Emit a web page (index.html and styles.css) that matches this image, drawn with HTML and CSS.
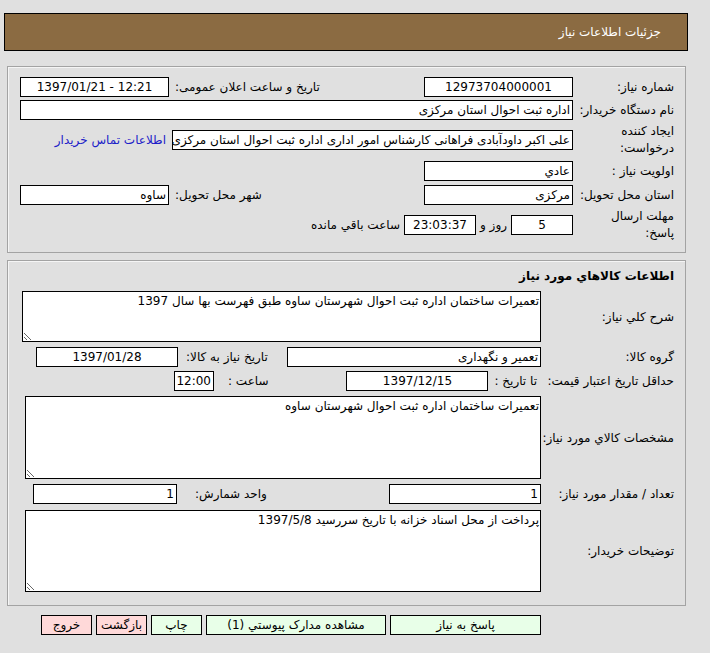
FILE: index.html
```html
<!DOCTYPE html>
<html lang="fa" dir="rtl">
<head>
<meta charset="utf-8">
<title>جزئیات اطلاعات نیاز</title>
<link rel="stylesheet" href="styles.css">
</head>
<body>
<div class="page">
  <div class="header"><span class="title">جزئیات اطلاعات نیاز</span></div>

  <div class="panel panel-info">
    <div class="grid">
      <div class="lbl">شماره نیاز:</div>
      <div class="box center">12973704000001</div>
      <div class="lbl2">تاریخ و ساعت اعلان عمومی:</div>
      <div class="box center ltr">1397/01/21 - 12:21</div>

      <div class="lbl">نام دستگاه خریدار:</div>
      <div class="box span3">اداره ثبت احوال استان مرکزی</div>

      <div class="lbl two">ایجاد کننده<br>درخواست:</div>
      <div class="span3 inline">
        <div class="box creator">علی اکبر داودآبادی فراهانی کارشناس امور اداری اداره ثبت احوال استان مرکزی</div>
        <a class="link" href="#">اطلاعات تماس خریدار</a>
      </div>

      <div class="lbl nudge">اولویت نیاز :</div>
      <div class="box nudge">عادي</div>

      <div class="lbl nudge">استان محل تحویل:</div>
      <div class="box nudge">مرکزی</div>
      <div class="lbl2 nudge">شهر محل تحویل:</div>
      <div class="box nudge">ساوه</div>

      <div class="lbl two">مهلت ارسال<br>پاسخ:</div>
      <div class="span3 inline">
        <div class="box center days">5</div>
        <span class="txt">روز و</span>
        <div class="box center clock">23:03:37</div>
        <span class="txt">ساعت باقي مانده</span>
      </div>
    </div>
  </div>

  <div class="panel panel-goods">
    <div class="goods-title">اطلاعات کالاهاي مورد نیاز</div>

    <div class="row row-desc">
      <div class="plbl">شرح کلي نیاز:</div>
      <div class="pcontent"><textarea class="ta ta-desc" readonly>تعمیرات ساختمان اداره ثبت احوال شهرستان ساوه طبق فهرست بها سال 1397</textarea></div>
    </div>

    <div class="row row-group">
      <div class="plbl">گروه کالا:</div>
      <div class="pcontent">
        <div class="box w-group">تعمیر و نگهداری</div>
        <div class="pair pair-need">
          <span class="txt">تاریخ نیاز به کالا:</span>
          <div class="box center w-need">1397/01/28</div>
        </div>
      </div>
    </div>

    <div class="row row-valid">
      <div class="plbl">حداقل تاریخ اعتبار قیمت:</div>
      <div class="pcontent">
        <span class="txt to-date">تا تاریخ :</span>
        <div class="box center w-valid">1397/12/15</div>
        <div class="pair pair-hour">
          <span class="txt">ساعت :</span>
          <div class="box center w-hour">12:00</div>
        </div>
      </div>
    </div>

    <div class="row row-spec">
      <div class="plbl">مشخصات کالاي مورد نیاز:</div>
      <div class="pcontent"><textarea class="ta ta-spec" readonly>تعمیرات ساختمان اداره ثبت احوال شهرستان ساوه</textarea></div>
    </div>

    <div class="row row-qty">
      <div class="plbl">تعداد / مقدار مورد نیاز:</div>
      <div class="pcontent">
        <div class="box w-qty">1</div>
        <div class="pair pair-unit">
          <span class="txt">واحد شمارش:</span>
          <div class="box w-unit">1</div>
        </div>
      </div>
    </div>

    <div class="row row-notes">
      <div class="plbl">توضیحات خریدار:</div>
      <div class="pcontent"><textarea class="ta ta-notes" readonly>پرداخت از محل اسناد خزانه با تاریخ سررسید 1397/5/8</textarea></div>
    </div>
  </div>

  <div class="buttons">
    <button class="btn green b-reply">پاسخ به نیاز</button>
    <button class="btn green b-docs">مشاهده مدارک پیوستي (1)</button>
    <button class="btn green b-small">چاپ</button>
    <button class="btn pink b-small">بازگشت</button>
    <button class="btn pink b-small">خروج</button>
  </div>
</div>
</body>
</html>
```

FILE: styles.css
```css
html, body {
  margin: 0;
  padding: 0;
  background: #e0e0e0;
}

body {
  font-family: "DejaVu Sans", sans-serif;
  font-size: 12px;
  color: #000;
}

.page {
  width: 684px;
  margin: 13px auto 0 4px;
}

.header {
  height: 36px;
  background: #8b6b42;
  border: 1px solid #000;
  display: flex;
  align-items: center;
  padding-right: 26px;
}

.title {
  color: #fff;
  font-size: 12px;
}

.panel {
  margin: 15px 2px 0 auto;
  border: 1px solid #a3a3a3;
  box-shadow: inset 1px 1px 0 #f5f5f5;
  background: #e0e0e0;
}

.panel-info {
  padding: 10px 11px 10px 11px;
  width: 655px;
}

.grid {
  display: grid;
  grid-template-columns: 101px 149px 255px 149px;
  row-gap: 3px;
  align-items: center;
}

.lbl {
  grid-column: 1;
  line-height: 18px;
  white-space: nowrap;
}

.lbl.two {
  line-height: 17px;
}

.nudge {
  margin-top: 1px;
}

.lbl2 {
  text-align: left;
  padding-left: 6px;
  white-space: nowrap;
}

.box {
  background: #fff;
  border: 1px solid #000;
  height: 18px;
  line-height: 18px;
  padding: 0 2px;
  white-space: nowrap;
  overflow: hidden;
  font-size: 12px;
}

.center {
  text-align: center;
}

.ltr {
  direction: ltr;
}

.span3 {
  grid-column: 2 / span 3;
}

.inline {
  display: flex;
  align-items: center;
}

.creator {
  width: 395px;
}

.link {
  color: #2020c8;
  text-decoration: none;
  margin-right: 6px;
  white-space: nowrap;
}

.days {
  width: 56px;
}

.clock {
  width: 66px;
}

.txt {
  white-space: nowrap;
  margin: 0 4px;
}

/* goods panel */
.panel-goods {
  width: 677px;
  margin-top: 7px;
  padding: 5px 0 13px 0;
}

.goods-title {
  font-weight: bold;
  line-height: 20px;
  padding-right: 11px;
  margin-bottom: 5px;
}

.row {
  display: flex;
  align-items: center;
}

.row-desc {
  margin-bottom: 5px;
}

.row-group {
  margin-bottom: 4px;
}

.row-valid {
  margin-bottom: 5px;
}

.row-spec {
  margin-bottom: 5px;
}

.row-qty {
  margin-bottom: 6px;
}

.plbl {
  width: 133px;
  padding-right: 11px;
  white-space: nowrap;
  flex: none;
}

.pcontent {
  flex: 1;
  display: flex;
  align-items: center;
}

.ta {
  font-family: "DejaVu Sans", sans-serif;
  font-size: 12px;
  background: #fff;
  border: 1px solid #000;
  padding: 1px;
  margin: 0;
  box-sizing: border-box;
  direction: rtl;
  line-height: 16px;
  display: block;
}

.ta-desc {
  width: 519px;
  height: 51px;
}

.ta-spec {
  width: 516px;
  height: 83px;
}

.ta-notes {
  width: 516px;
  height: 82px;
}

.w-group {
  width: 248px;
}

.pair {
  display: flex;
  align-items: center;
  margin-right: auto;
}

.pair .txt {
  margin: 0 0 0 8px;
}

.pair-need {
  margin-left: 28px;
}

.w-need {
  width: 136px;
}

.to-date {
  margin: 0 4px 0 6px;
}

.w-valid {
  width: 136px;
}

.pair-hour {
  margin-left: 166px;
}

.pair-hour .txt {
  margin-left: 14px;
}

.w-hour {
  width: 34px;
}

.w-qty {
  width: 146px;
}

.pair-unit {
  margin-left: 25px;
}

.pair-unit .txt {
  margin-left: 18px;
}

.w-unit {
  width: 138px;
}

/* buttons */
.buttons {
  display: flex;
  gap: 4px;
  padding-right: 147px;
  margin-top: 9px;
}

.btn {
  font-family: "DejaVu Sans", sans-serif;
  font-size: 12px;
  height: 20px;
  line-height: 18px;
  padding: 0;
  border: 1px solid #000;
  color: #000;
  white-space: nowrap;
}

.green {
  background: #e8ffe8;
}

.pink {
  background: #ffd9d9;
}

.b-reply {
  width: 151px;
}

.b-docs {
  width: 180px;
}

.b-small {
  width: 51px;
}
```
